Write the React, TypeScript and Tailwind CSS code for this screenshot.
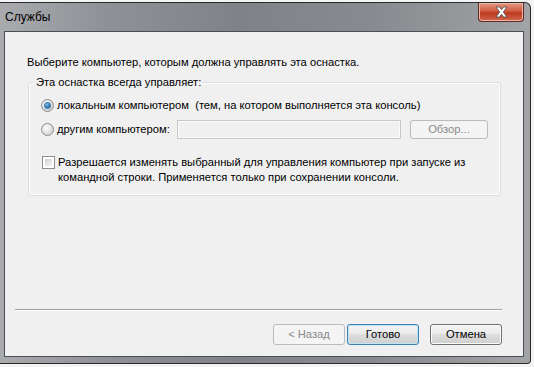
import React from 'react'

const font = { fontFamily: '"Liberation Sans", Arial, sans-serif' }

const Radio = ({ checked }: { checked?: boolean }) => (
  <span className="flex h-[13px] w-[13px] shrink-0 items-center justify-center rounded-full border border-[#8a8a8a] bg-[radial-gradient(circle_at_40%_35%,#ffffff,#dcdcdc_60%,#c9c9c9)]">
    {checked && (
      <span className="h-[5px] w-[5px] rounded-full bg-[radial-gradient(circle_at_40%_35%,#7fc0ee,#1e5f98_70%)] shadow-[0_0_0_1px_#3a7fb4]" />
    )}
  </span>
)

const Button = ({
  label,
  disabled,
  active,
}: {
  label: string
  disabled?: boolean
  active?: boolean
}) => {
  if (disabled)
    return (
      <div className="flex h-[21px] w-[72px] items-center justify-center rounded-[3px] border border-[#b8bcbf] bg-[#f4f4f4] text-[11.2px] text-[#8a8a8a]">
        {label}
      </div>
    )
  return (
    <div
      className={
        'flex h-[21px] w-[72px] items-center justify-center rounded-[3px] border text-[11.2px] text-black bg-[linear-gradient(#f3f3f3,#ebebeb_45%,#dddddd_50%,#cfcfcf)] ' +
        (active
          ? 'border-[#3c7fb1] shadow-[inset_0_0_0_1px_#bfe6f8]'
          : 'border-[#707070] shadow-[inset_0_0_0_1px_#fcfcfc]')
      }
    >
      {label}
    </div>
  )
}

export default function App() {
  return (
    <div className="h-[367px] w-[534px] overflow-hidden bg-[#f4f4f4]" style={font}>
      <div className="ml-0 mt-[2px] h-[362px] w-[531px] rounded-tr-[6px] rounded-br-[4px] border-t border-r border-b border-[#2a2a2a] bg-[linear-gradient(to_right,#a9abae,#8e9196_20%,#7f8287_45%,#878a8e_70%,#a1a3a6)] pr-[6px] pb-[6px]">
        <div className="flex h-[28px] items-start justify-between">
          <div className="pl-[5px] pt-[7px] text-[12px] leading-[14px] text-black">Службы</div>
          <div className="flex h-[19px] w-[46px] items-center justify-center rounded-b-[4px] border border-t-0 border-[#5e2a22] bg-[linear-gradient(#e39a87,#cf5a3f_45%,#bb3a1f_55%,#d0674b)] shadow-[inset_0_0_0_1px_#f0b7a8]">
            <svg width="15" height="12" viewBox="0 0 15 12">
              <path
                d="M2 1 L5.5 1 L7.5 3.7 L9.5 1 L13 1 L9.3 6 L13 11 L9.5 11 L7.5 8.3 L5.5 11 L2 11 L5.7 6 Z"
                fill="#ffffff"
                stroke="#4a4a4a"
                strokeWidth="0.8"
              />
            </svg>
          </div>
        </div>
        <div className="ml-[4px] h-[326px] border border-[#4b4f55] bg-[#f0f0f0] text-[11.2px] leading-[13px] text-black">
          <div className="pl-[22px] pt-[24px]">Выберите компьютер, которым должна управлять эта оснастка.</div>
          <div className="relative ml-[23px] mt-[13px] h-[114px] w-[473px] rounded-[3px] border border-[#d5dfe5] shadow-[inset_0_0_0_1px_#ffffff]">
            <div className="absolute left-[6px] top-[-7px] bg-[#f0f0f0] px-[1px]">Эта оснастка всегда управляет:</div>
            <div className="flex flex-col pl-[12px] pt-[16px]">
              <div className="flex items-center gap-[3px]">
                <Radio checked />
                <span>локальным компьютером&nbsp; (тем, на котором выполняется эта консоль)</span>
              </div>
              <div className="mt-[8px] flex items-center">
                <Radio />
                <span className="ml-[3px] w-[120px]">другим компьютером:</span>
                <div className="h-[19px] w-[224px] border border-[#c6c9cc] bg-[#f0f0f0] shadow-[inset_0_0_0_1px_#fafafa]" />
                <div className="ml-[9px] flex h-[19px] w-[78px] items-center justify-center rounded-[3px] border border-[#b8bcbf] bg-[#f4f4f4] text-[#8a8a8a]">
                  Обзор...
                </div>
              </div>
              <div className="mt-[16px] flex items-start gap-[3px] pl-[1px]">
                <span className="mt-[1px] h-[13px] w-[13px] shrink-0 border border-[#8e8f8f] bg-white p-[2px]">
                  <span className="block h-full w-full bg-[linear-gradient(135deg,#cbcfd5,#f6f6f6)]" />
                </span>
                <span className="leading-[15px]">
                  Разрешается изменять выбранный для управления компьютер при запуске из
                  <br />
                  командной строки. Применяется только при сохранении консоли.
                </span>
              </div>
            </div>
          </div>
          <div className="ml-[10px] mt-[113px] h-[2px] w-[487px] border-t border-[#a0a0a0] border-b border-b-white" />
          <div className="mr-[21px] mt-[13px] flex justify-end">
            <Button label="< Назад" disabled />
            <div className="ml-[2px]">
              <Button label="Готово" active />
            </div>
            <div className="ml-[11px]">
              <Button label="Отмена" />
            </div>
          </div>
        </div>
      </div>
    </div>
  )
}
